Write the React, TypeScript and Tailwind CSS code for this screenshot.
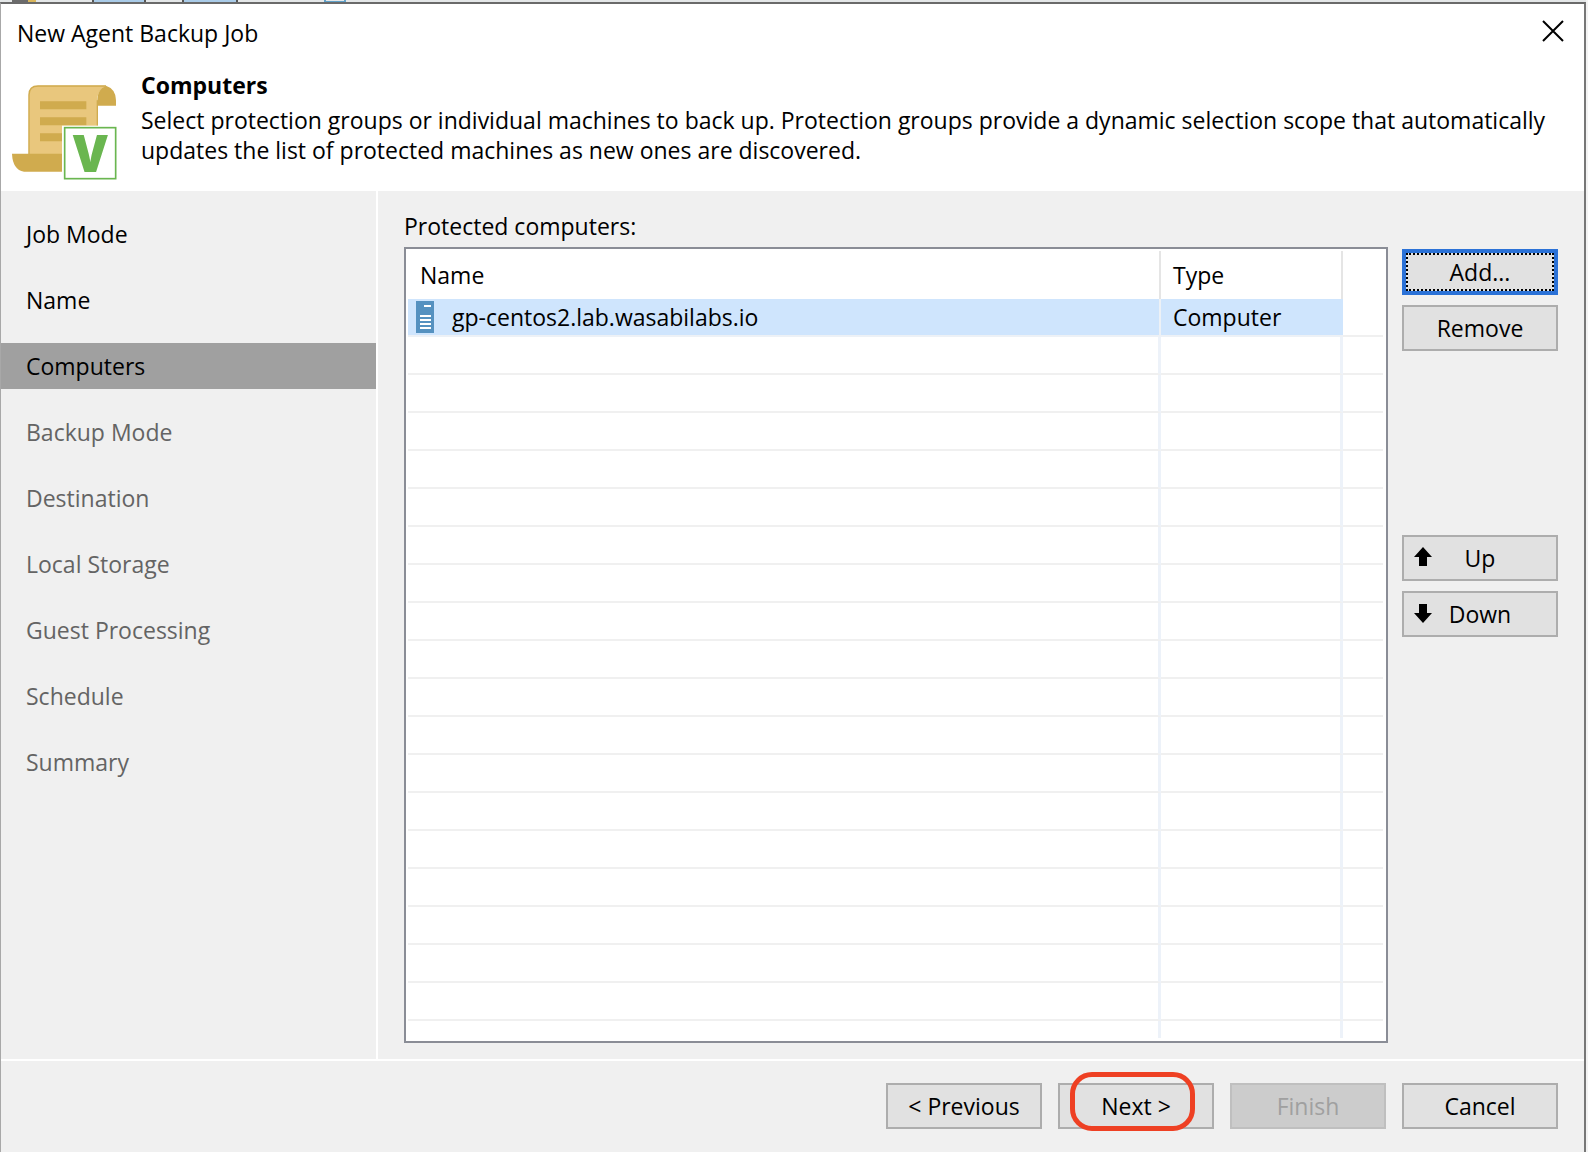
import React, { useState } from 'react';
import clsx from 'clsx';

const steps = [
  'Job Mode',
  'Name',
  'Computers',
  'Backup Mode',
  'Destination',
  'Local Storage',
  'Guest Processing',
  'Schedule',
  'Summary'
];

const computers = [{ name: 'gp-centos2.lab.wasabilabs.io', type: 'Computer' }];

const EMPTY_ROWS = 18;

const JobIcon = () => (
  <svg className="w-[105px] h-[97px] shrink-0 overflow-visible" viewBox="36 251 315 291" aria-hidden="true">
    <path d="M86 462V284Q86 256 114 256H318Q292 268 292 300V462Z" fill="#e9c77d" />
    <path d="M87 462V284Q87 257 114 257H318M292 380V300" fill="none" stroke="#d0ab4e" strokeWidth="4" />
    <path d="M292 316V300Q292 266 318 256Q348 266 348 300V316Z" fill="#d0ab4e" />
    <path d="M36 460H200V514H72Q38 508 36 460Z" fill="#d0ab4e" />
    <path d="M120 303H259V327H120ZM120 351H259V375H120ZM120 399H200V423H120Z" fill="#d0ab4e" />
    <rect x="186" y="376" width="166" height="166" fill="#fff" />
    <rect x="194" y="382" width="153" height="153" fill="#fff" stroke="#6ab650" strokeWidth="5" />
    <text
      x="271"
      y="514"
      textAnchor="middle"
      fontSize="152"
      fill="#6ab650"
      className="font-['Open_Sans',sans-serif] font-extrabold"
    >
      V
    </text>
  </svg>
);

const ServerIcon = () => (
  <svg className="w-[18px] h-8 shrink-0" viewBox="0 0 18 32" aria-hidden="true">
    <rect width="18" height="32" fill="#5591c0" />
    <path d="M8 4H15V6H8ZM4 14H15V16H4ZM4 18H15V20H4ZM4 22H15V24H4ZM4 26H15V28H4Z" fill="#fff" />
  </svg>
);

const ArrowIcon = ({ down }: { down?: boolean }) => (
  <svg
    className={clsx('absolute left-[9px] top-[10px] w-5 h-5', down && 'rotate-180')}
    viewBox="0 0 20 20"
    aria-hidden="true"
  >
    <path d="M10 0L19 10H14V19H6V10H1Z" fill="#000" />
  </svg>
);

type DialogButtonProps = React.ButtonHTMLAttributes<HTMLButtonElement> & { focused?: boolean };

const DialogButton = ({ focused, className, children, ...rest }: DialogButtonProps) => (
  <button
    type="button"
    className={clsx(
      'relative w-[156px] h-[46px] flex items-center justify-center shrink-0',
      focused ? 'border-4 border-[#2b72d7]' : 'border-2',
      !focused && (rest.disabled ? 'border-[#bfbfbf]' : 'border-[#adadad]'),
      rest.disabled ? 'bg-[#cccccc] text-[#a0a0a0]' : 'bg-[#e1e1e1] text-black',
      className
    )}
    {...rest}
  >
    {focused && <span className="absolute inset-0 border-2 border-dotted border-black" />}
    {children}
  </button>
);

// Sliver of the parent window's toolbar above the dialog
const ParentToolbar = () => (
  <div className="flex h-[2px] bg-[#e4e7e8]">
    <div className="w-3" />
    <div className="w-4 bg-[#6b6b6b]" />
    <div className="w-2 bg-[#d9b65c]" />
    <div className="w-14" />
    <div className="w-0.5 bg-[#555555]" />
    <div className="w-[50px] bg-[#a9cbe8]" />
    <div className="w-0.5 bg-[#555555]" />
    <div className="w-9" />
    <div className="w-0.5 bg-[#555555]" />
    <div className="w-[52px] bg-[#a9cbe8]" />
    <div className="w-0.5 bg-[#555555]" />
    <div className="w-[86px]" />
    <div className="w-[22px] border-x-2 border-b border-[#5fa0c8]" />
  </div>
);

export default function App() {
  const [active, setActive] = useState(2);

  return (
    <div className="min-h-screen flex flex-col bg-[#f3f3f3] pr-[2px] text-[23px] leading-[30px] text-black font-['Open_Sans','Noto_Sans',sans-serif]">
      <ParentToolbar />

      <div className="flex-1 flex flex-col bg-[#f0f0f0] border-t-2 border-r-2 border-l border-t-[#6a6a6a] border-r-[#777777] border-l-[#a8a8a8]">
        {/* Title bar and step header */}
        <header className="bg-white h-[187px]">
          <div className="flex items-start justify-between pl-4 pr-[20px] pt-[14px] h-[66px]">
            <span>New Agent Backup Job</span>
            <button type="button" aria-label="Close" className="pt-[2px]">
              <svg className="w-[22px] h-[22px]" viewBox="0 0 22 22" fill="none" stroke="#000" strokeWidth="2">
                <path d="M1 1L21 21M21 1L1 21" />
              </svg>
            </button>
          </div>
          <div className="flex pl-[11px] gap-6">
            <div className="pt-[14px]">
              <JobIcon />
            </div>
            <div>
              <h1 className="font-bold">Computers</h1>
              <p className="pt-[5px] max-w-[1420px]">
                Select protection groups or individual machines to back up. Protection groups provide a dynamic
                selection scope that automatically updates the list of protected machines as new ones are discovered.
              </p>
            </div>
          </div>
        </header>

        <main className="flex-1 flex">
          {/* Wizard steps */}
          <nav className="w-[377px] shrink-0 border-r-2 border-white pt-5">
            <ol className="flex flex-col gap-5">
              {steps.map((step, index) => (
                <li key={step}>
                  <button
                    type="button"
                    onClick={() => setActive(index)}
                    className={clsx(
                      'w-full h-[46px] pl-[25px] text-left',
                      index === active && 'bg-[#a0a0a0]',
                      index > active ? 'text-[#646464]' : 'text-black'
                    )}
                  >
                    {step}
                  </button>
                </li>
              ))}
            </ol>
          </nav>

          <section className="flex-1 flex flex-col pl-[26px] pr-[26px] pt-5 pb-4">
            <h2 id="computers-label" className="h-9">Protected computers:</h2>
            <div className="flex-1 flex gap-[14px]">
              <div className="flex-1 bg-white border-2 border-[#8a8d96] pt-[2px] pl-[2px] pr-[3px] pb-[3px]">
                <table aria-labelledby="computers-label" className="w-full table-fixed border-separate border-spacing-0">
                  <colgroup>
                    <col />
                    <col className="w-[182px]" />
                    <col className="w-10" />
                  </colgroup>
                  <thead>
                    <tr className="h-12 text-left">
                      <th className="p-0 pl-3 font-normal border-r-2 border-[#e5e5e5]">Name</th>
                      <th className="p-0 pl-3 font-normal border-r-2 border-[#e5e5e5]">Type</th>
                      <td />
                    </tr>
                  </thead>
                  <tbody>
                    {computers.map((computer) => (
                      <tr key={computer.name} className="h-[38px]">
                        <td className="p-0 pl-2 bg-[#cfe5fd] border-r-2 border-b-2 border-[#edf1f6]">
                          <div className="flex items-center gap-[18px] h-9">
                            <ServerIcon />
                            <span>{computer.name}</span>
                          </div>
                        </td>
                        <td className="p-0 pl-3 bg-[#cfe5fd] border-b-2 border-[#edf1f6]">{computer.type}</td>
                        <td className="p-0 border-b-2 border-[#f0f0f0]" />
                      </tr>
                    ))}
                    {Array.from({ length: EMPTY_ROWS }, (_, index) => (
                      <tr key={index} className="h-[38px]">
                        <td className="p-0 border-r-3 border-b-2 border-r-[#edf2f9] border-b-[#f0f0f0]" />
                        <td className="p-0 border-r-3 border-b-2 border-r-[#edf2f9] border-b-[#f0f0f0]" />
                        <td className="p-0 border-b-2 border-b-[#f0f0f0]" />
                      </tr>
                    ))}
                    <tr className="h-[17px]">
                      <td className="p-0 border-r-3 border-[#edf2f9]" />
                      <td className="p-0 border-r-3 border-[#edf2f9]" />
                      <td className="p-0" />
                    </tr>
                  </tbody>
                </table>
              </div>

              <div className="flex flex-col gap-[10px] pt-[2px]">
                <DialogButton focused>Add...</DialogButton>
                <DialogButton>Remove</DialogButton>
                <DialogButton className="mt-[174px]">
                  <ArrowIcon />
                  Up
                </DialogButton>
                <DialogButton>
                  <ArrowIcon down />
                  Down
                </DialogButton>
              </div>
            </div>
          </section>
        </main>

        <footer className="flex justify-end gap-4 border-t-2 border-white pt-[22px] pb-6 pr-[26px]">
          <DialogButton>&lt; Previous</DialogButton>
          <div className="relative">
            <DialogButton>Next &gt;</DialogButton>
            <span className="absolute left-3 -top-[11px] w-[125px] h-[59px] rounded-[22px] border-5 border-[#ee4023] pointer-events-none" />
          </div>
          <DialogButton disabled>Finish</DialogButton>
          <DialogButton>Cancel</DialogButton>
        </footer>
      </div>
    </div>
  );
}
